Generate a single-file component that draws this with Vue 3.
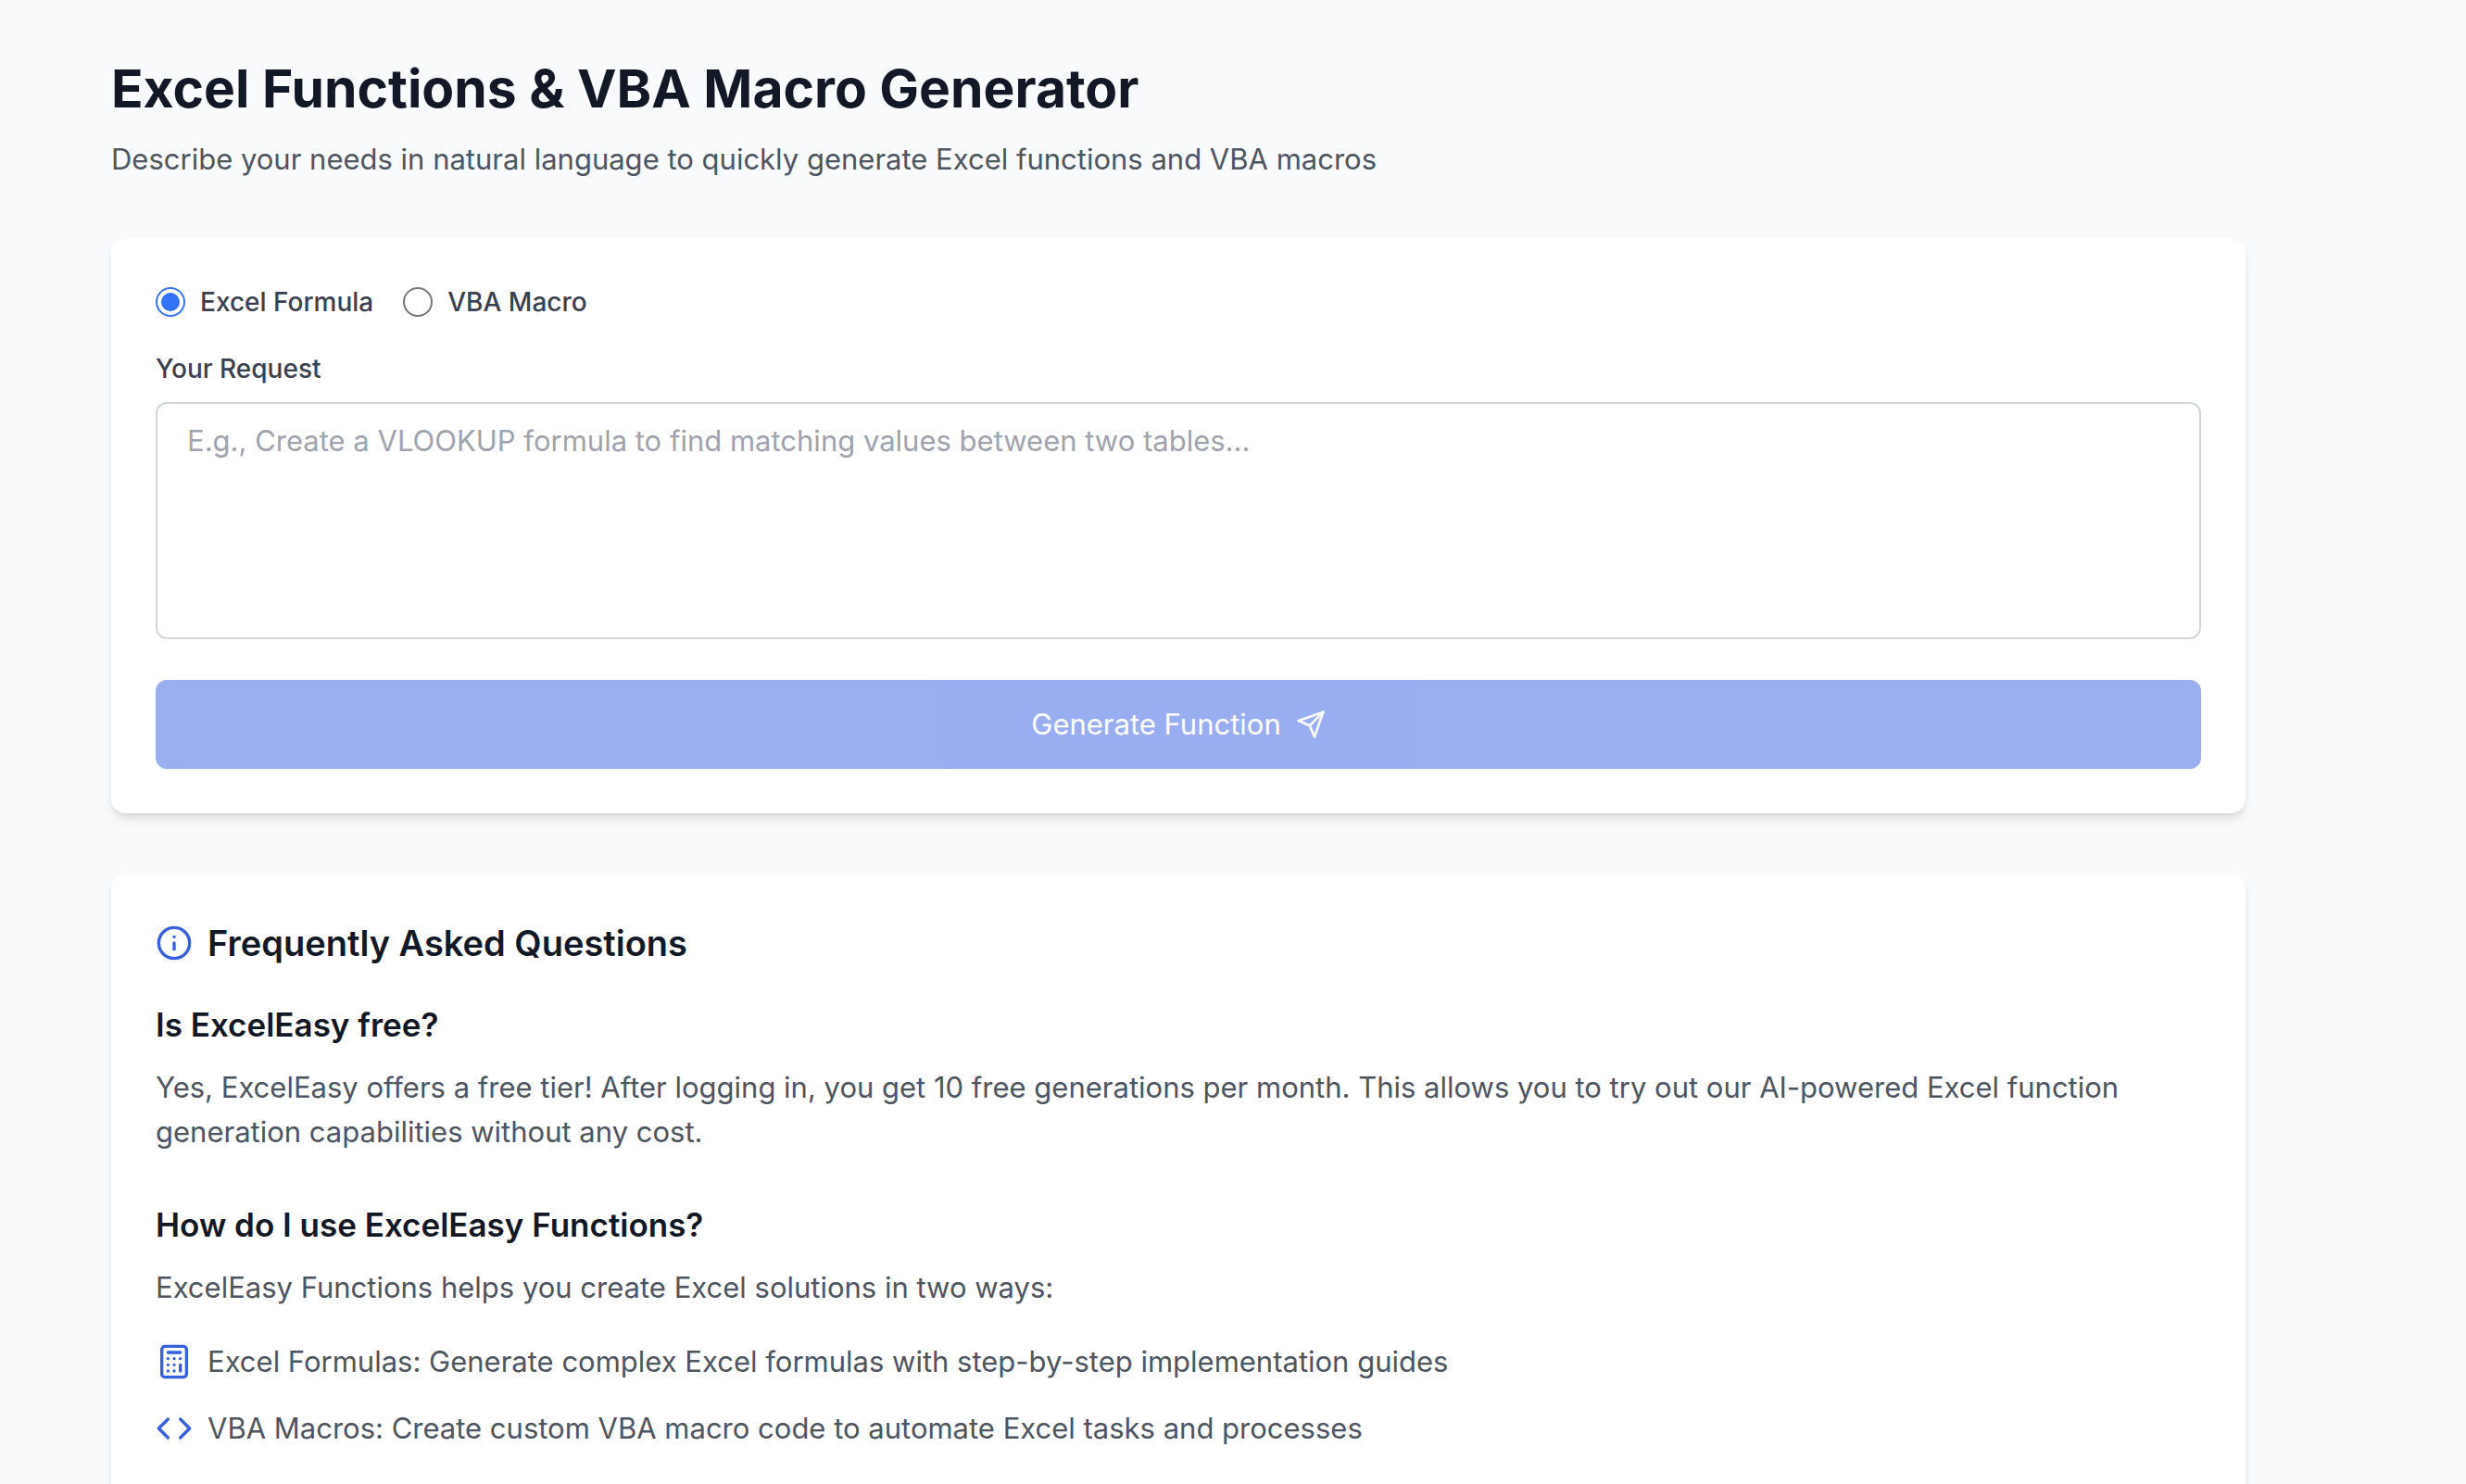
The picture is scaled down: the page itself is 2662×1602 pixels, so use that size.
<script setup>
import { ref } from 'vue'

const mode = ref('formula')
const request = ref('')

const modes = [
  { value: 'formula', label: 'Excel Formula' },
  { value: 'macro', label: 'VBA Macro' },
]
</script>

<template>
  <main class="page">
    <header class="intro">
      <h1>Excel Functions &amp; VBA Macro Generator</h1>
      <p>Describe your needs in natural language to quickly generate Excel functions and VBA macros</p>
    </header>

    <form class="card" @submit.prevent>
      <div class="modes">
        <label v-for="m in modes" :key="m.value" class="mode">
          <input v-model="mode" type="radio" name="mode" :value="m.value" />
          <span>{{ m.label }}</span>
        </label>
      </div>
      <label class="field-label" for="request">Your Request</label>
      <textarea
        id="request"
        v-model="request"
        placeholder="E.g., Create a VLOOKUP formula to find matching values between two tables..."
      ></textarea>
      <button class="submit" type="submit" :disabled="!request.trim()">
        <span>Generate Function</span>
        <svg class="icon-send" viewBox="0 0 24 24" aria-hidden="true">
          <path d="m22 2-7 20-4-9-9-4Z" />
          <path d="M22 2 11 13" />
        </svg>
      </button>
    </form>

    <section class="card faq">
      <h2>
        <svg class="icon" viewBox="0 0 24 24" aria-hidden="true">
          <circle cx="12" cy="12" r="10" />
          <path d="M12 16v-4" />
          <path d="M12 8h.01" />
        </svg>
        <span>Frequently Asked Questions</span>
      </h2>

      <article>
        <h3>Is ExcelEasy free?</h3>
        <p>
          Yes, ExcelEasy offers a free tier! After logging in, you get 10 free generations per month.
          This allows you to try out our AI-powered Excel function generation capabilities without any cost.
        </p>
      </article>

      <article>
        <h3>How do I use ExcelEasy Functions?</h3>
        <p>ExcelEasy Functions helps you create Excel solutions in two ways:</p>
        <ul>
          <li>
            <svg class="icon" viewBox="0 0 24 24" aria-hidden="true">
              <rect width="16" height="20" x="4" y="2" rx="2" />
              <path d="M8 6h8" />
              <path d="M16 14v4" />
              <path d="M16 10h.01M12 10h.01M8 10h.01M12 14h.01M8 14h.01M12 18h.01M8 18h.01" />
            </svg>
            <span>Excel Formulas: Generate complex Excel formulas with step-by-step implementation guides</span>
          </li>
          <li>
            <svg class="icon" viewBox="0 0 24 24" aria-hidden="true">
              <polyline points="16 18 22 12 16 6" />
              <polyline points="8 6 2 12 8 18" />
            </svg>
            <span>VBA Macros: Create custom VBA macro code to automate Excel tasks and processes</span>
          </li>
        </ul>
      </article>
    </section>
  </main>
</template>

<style>
body {
  background: #f9fafc;
}
</style>

<style scoped>
.page {
  box-sizing: border-box;
  height: 100vh;
  overflow: hidden;
  padding: 60px 238px 0 120px;
  font-family: Inter, "Liberation Sans", sans-serif;
  font-size: 31px;
  line-height: 48px;
  color: #4d5561;
}

h1,
h2,
h3,
p,
ul {
  margin: 0;
  padding: 0;
}

h1,
h2,
h3 {
  color: #131826;
}

.intro {
  margin-bottom: 62px;
}

h1 {
  margin-bottom: 16px;
  font-size: 57px;
  font-weight: 700;
  line-height: 72px;
}

.card {
  box-sizing: border-box;
  margin-bottom: 64px;
  padding: 48px;
  border-radius: 16px;
  background: #fff;
  box-shadow: 0 8px 12px -2px rgb(0 0 0 / 0.1), 0 4px 8px -4px rgb(0 0 0 / 0.1);
}

.modes {
  display: flex;
  gap: 32px;
  margin-bottom: 32px;
}

.mode {
  display: flex;
  align-items: center;
  gap: 16px;
}

.mode,
.field-label {
  font-size: 28px;
  font-weight: 500;
  line-height: 40px;
  color: #394150;
}

.mode input {
  appearance: none;
  display: grid;
  place-items: center;
  box-sizing: border-box;
  width: 32px;
  height: 32px;
  margin: 0;
  border: 2px solid #767676;
  border-radius: 50%;
  background: #fff;
}

.mode input:checked {
  border-color: #3371f5;
}

.mode input:checked::before {
  content: "";
  width: 20px;
  height: 20px;
  border-radius: 50%;
  background: #3371f5;
}

.field-label {
  display: block;
  margin-bottom: 16px;
}

textarea {
  display: block;
  box-sizing: border-box;
  width: 100%;
  height: 256px;
  margin: 0 0 44px;
  padding: 16px 32px;
  border: 2px solid #d2d5da;
  border-radius: 12px;
  background: #fff;
  font: inherit;
  color: #131826;
  resize: none;
}

textarea::placeholder {
  color: #9ea3ae;
}

.submit {
  display: flex;
  align-items: center;
  justify-content: center;
  gap: 16px;
  width: 100%;
  padding: 24px 32px;
  border: 0;
  border-radius: 12px;
  background: #3660e2;
  font: inherit;
  color: #fff;
}

.submit:disabled {
  opacity: 0.5;
}

.icon,
.icon-send {
  flex: none;
  fill: none;
  stroke: currentColor;
  stroke-width: 2;
  stroke-linecap: round;
  stroke-linejoin: round;
}

.icon {
  width: 40px;
  height: 40px;
  color: #3660dc;
}

.icon-send {
  width: 32px;
  height: 32px;
}

.faq {
  padding-bottom: 96px;
}

h2 {
  display: flex;
  align-items: center;
  gap: 16px;
  margin-bottom: 32px;
  font-size: 38px;
  font-weight: 600;
  line-height: 56px;
}

article + article {
  margin-top: 48px;
}

h3 {
  margin-bottom: 16px;
  font-size: 35px;
  font-weight: 600;
  line-height: 56px;
}

ul {
  display: flex;
  flex-direction: column;
  gap: 24px;
  margin-top: 32px;
  list-style: none;
}

li {
  display: flex;
  align-items: center;
  gap: 16px;
}
</style>
